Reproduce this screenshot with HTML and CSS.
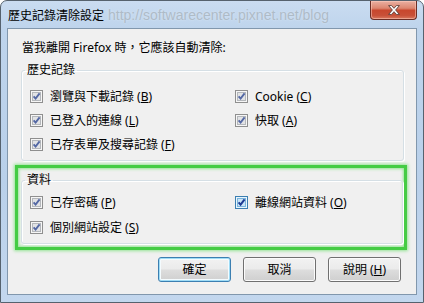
FILE: index.html
```html
<!DOCTYPE html>
<html lang="zh-Hant">
<head>
<meta charset="utf-8">
<title>歷史記錄清除設定</title>
<link rel="stylesheet" href="styles.css">
</head>
<body>
<div class="window">
  <div class="titlebar">
    <span class="title">歷史記錄清除設定</span>
    <span class="watermark">http://softwarecenter.pixnet.net/blog</span>
    <button class="close" aria-label="關閉">
      <svg width="12" height="10" viewBox="0 0 12 10"><path d="M0.6 0.6 H3.6 L6 3.3 L8.4 0.6 H11.4 L7.6 5 L11.4 9.4 H8.4 L6 6.7 L3.6 9.4 H0.6 L4.4 5 Z" fill="#ffffff" stroke="#5b3b36" stroke-width="0.9" stroke-linejoin="round"/></svg>
    </button>
  </div>
  <div class="client">
    <p class="prompt">當我離開 Firefox 時，它應該自動清除:</p>
    <fieldset class="group history">
      <legend>歷史記錄</legend>
      <div class="grid">
        <label class="check"><svg class="box" width="13" height="13" viewBox="0 0 13 13"><rect x="0.5" y="0.5" width="12" height="12" fill="#f6f6f6" stroke="#8f8f8f"/><rect x="2.5" y="2.5" width="8" height="8" fill="#e2e3e5" stroke="#b4b7bb"/><path d="M3.6 6.3 L5.6 8.6 L9.6 3.4" fill="none" stroke="#5468a4" stroke-width="1.9"/></svg><span>瀏覽與下載記錄 (<u>B</u>)</span></label>
        <label class="check"><svg class="box" width="13" height="13" viewBox="0 0 13 13"><rect x="0.5" y="0.5" width="12" height="12" fill="#f6f6f6" stroke="#8f8f8f"/><rect x="2.5" y="2.5" width="8" height="8" fill="#e2e3e5" stroke="#b4b7bb"/><path d="M3.6 6.3 L5.6 8.6 L9.6 3.4" fill="none" stroke="#5468a4" stroke-width="1.9"/></svg><span>Cookie (<u>C</u>)</span></label>
        <label class="check"><svg class="box" width="13" height="13" viewBox="0 0 13 13"><rect x="0.5" y="0.5" width="12" height="12" fill="#f6f6f6" stroke="#8f8f8f"/><rect x="2.5" y="2.5" width="8" height="8" fill="#e2e3e5" stroke="#b4b7bb"/><path d="M3.6 6.3 L5.6 8.6 L9.6 3.4" fill="none" stroke="#5468a4" stroke-width="1.9"/></svg><span>已登入的連線 (<u>L</u>)</span></label>
        <label class="check"><svg class="box" width="13" height="13" viewBox="0 0 13 13"><rect x="0.5" y="0.5" width="12" height="12" fill="#f6f6f6" stroke="#8f8f8f"/><rect x="2.5" y="2.5" width="8" height="8" fill="#e2e3e5" stroke="#b4b7bb"/><path d="M3.6 6.3 L5.6 8.6 L9.6 3.4" fill="none" stroke="#5468a4" stroke-width="1.9"/></svg><span>快取 (<u>A</u>)</span></label>
        <label class="check"><svg class="box" width="13" height="13" viewBox="0 0 13 13"><rect x="0.5" y="0.5" width="12" height="12" fill="#f6f6f6" stroke="#8f8f8f"/><rect x="2.5" y="2.5" width="8" height="8" fill="#e2e3e5" stroke="#b4b7bb"/><path d="M3.6 6.3 L5.6 8.6 L9.6 3.4" fill="none" stroke="#5468a4" stroke-width="1.9"/></svg><span>已存表單及搜尋記錄 (<u>F</u>)</span></label>
      </div>
    </fieldset>
    <div class="highlight">
      <fieldset class="group data">
        <legend>資料</legend>
        <div class="grid">
          <label class="check"><svg class="box" width="13" height="13" viewBox="0 0 13 13"><rect x="0.5" y="0.5" width="12" height="12" fill="#f6f6f6" stroke="#8f8f8f"/><rect x="2.5" y="2.5" width="8" height="8" fill="#e2e3e5" stroke="#b4b7bb"/><path d="M3.6 6.3 L5.6 8.6 L9.6 3.4" fill="none" stroke="#5468a4" stroke-width="1.9"/></svg><span>已存密碼 (<u>P</u>)</span></label>
          <label class="check"><svg class="box" width="13" height="13" viewBox="0 0 13 13"><rect x="0.5" y="0.5" width="12" height="12" fill="#eaf5fd" stroke="#3c7fb1"/><rect x="2.5" y="2.5" width="8" height="8" fill="#c9e4f7" stroke="#79b5dd"/><path d="M3.6 6.3 L5.6 8.6 L9.6 3.4" fill="none" stroke="#1c3a94" stroke-width="2"/></svg><span>離線網站資料 (<u>O</u>)</span></label>
          <label class="check"><svg class="box" width="13" height="13" viewBox="0 0 13 13"><rect x="0.5" y="0.5" width="12" height="12" fill="#f6f6f6" stroke="#8f8f8f"/><rect x="2.5" y="2.5" width="8" height="8" fill="#e2e3e5" stroke="#b4b7bb"/><path d="M3.6 6.3 L5.6 8.6 L9.6 3.4" fill="none" stroke="#5468a4" stroke-width="1.9"/></svg><span>個別網站設定 (<u>S</u>)</span></label>
        </div>
      </fieldset>
    </div>
    <div class="buttons">
      <button class="btn default">確定</button>
      <button class="btn">取消</button>
      <button class="btn">說明 (<u>H</u>)</button>
    </div>
  </div>
</div>
</body>
</html>
```

FILE: styles.css
```css
html, body {
  margin: 0;
  padding: 0;
}

body {
  width: 424px;
  height: 303px;
  overflow: hidden;
  font-family: "Noto Sans", "Noto Sans CJK TC", sans-serif;
  font-size: 12px;
  color: #000;
  background: #ffffff;
}

.window {
  width: 424px;
  height: 303px;
  box-sizing: border-box;
  border: 1px solid #56626e;
  border-radius: 7px 7px 0 0;
  background: linear-gradient(180deg, #cadcf1 0px, #bed4ec 28px, #b9d0ea 60%, #c3d7ee 100%);
  display: flex;
  flex-direction: column;
}

.titlebar {
  height: 27px;
  display: flex;
  align-items: center;
  padding-left: 7px;
}

.title {
  font-family: "Noto Sans CJK TC", sans-serif;
  font-size: 12px;
  line-height: 14px;
  color: #000;
}

.watermark {
  margin-left: 4px;
  font-family: "Liberation Sans", Arial, sans-serif;
  font-size: 14px;
  line-height: 16px;
  color: #aebbc7;
  text-shadow: 0 0 2px #dce8f5;
}

.close {
  margin-left: auto;
  margin-right: 6px;
  align-self: flex-start;
  width: 47px;
  height: 19px;
  padding: 0;
  border: 1px solid #6b2e26;
  border-top: 0;
  border-radius: 0 0 4px 4px;
  background: linear-gradient(180deg, #eab0a2 0%, #dc8670 40%, #c8472e 52%, #c85038 80%, #d9785f 100%);
  box-shadow: inset 0 0 0 1px rgba(255, 210, 195, 0.5);
  display: flex;
  align-items: center;
  justify-content: center;
}

.close svg {
  display: block;
}

.client {
  flex: 1;
  margin: 0 6px 7px 6px;
  border: 1px solid #8197ad;
  background: #f0f0f0;
  display: flex;
  flex-direction: column;
}

.prompt {
  margin: 0;
  padding: 11px 0 0 14px;
  line-height: 15px;
}

.group {
  margin: 0;
  min-width: 0;
  border: 1px solid #d5dfe5;
  border-radius: 3px;
  box-shadow: inset 1px 1px 0 #ffffff, 1px 1px 0 #ffffff;
}

.group legend {
  padding: 0 2px;
  margin-left: -5px;
  line-height: 14px;
}

.history {
  margin: 8px 12px 0 13px;
  padding: 7px 0 4px 8px;
}

.history .grid {
  grid-auto-rows: 24px;
}

.highlight {
  margin: 4px 9px 0 7px;
  padding: 5px 1px 3px 3px;
  border: 3px solid #44cc44;
  box-shadow: 0 0 3px 1px #94e494, inset 0 0 3px 1px #94e494;
}

.data {
  padding: 3px 0 3px 8px;
}

.data .grid {
  grid-auto-rows: 25px;
}

.grid {
  display: grid;
  grid-template-columns: 205px 1fr;
}

.check {
  display: flex;
  align-items: center;
  gap: 7px;
  line-height: 15px;
  white-space: nowrap;
}

.box {
  display: block;
  flex: none;
}

u {
  text-decoration: underline;
  text-underline-offset: 1px;
}

.buttons {
  display: flex;
  justify-content: flex-end;
  gap: 12px;
  margin: 7px 15px 0 0;
}

.btn {
  width: 73px;
  height: 25px;
  padding: 0;
  font-family: "Noto Sans", "Noto Sans CJK TC", sans-serif;
  font-size: 12px;
  line-height: 15px;
  color: #000;
  border: 1px solid #707070;
  border-radius: 3px;
  background: linear-gradient(180deg, #f2f2f2 0%, #ebebeb 48%, #dddddd 52%, #cfcfcf 100%);
  box-shadow: inset 0 0 0 1px #fbfbfb;
}

.btn.default {
  border-color: #3c7fb1;
  box-shadow: inset 0 0 0 1px #9fdcf6, inset 0 0 0 2px #f4fbfe;
  background: linear-gradient(180deg, #f2f2f2 0%, #ebebeb 48%, #dddddd 52%, #cfcfcf 100%);
}
```
